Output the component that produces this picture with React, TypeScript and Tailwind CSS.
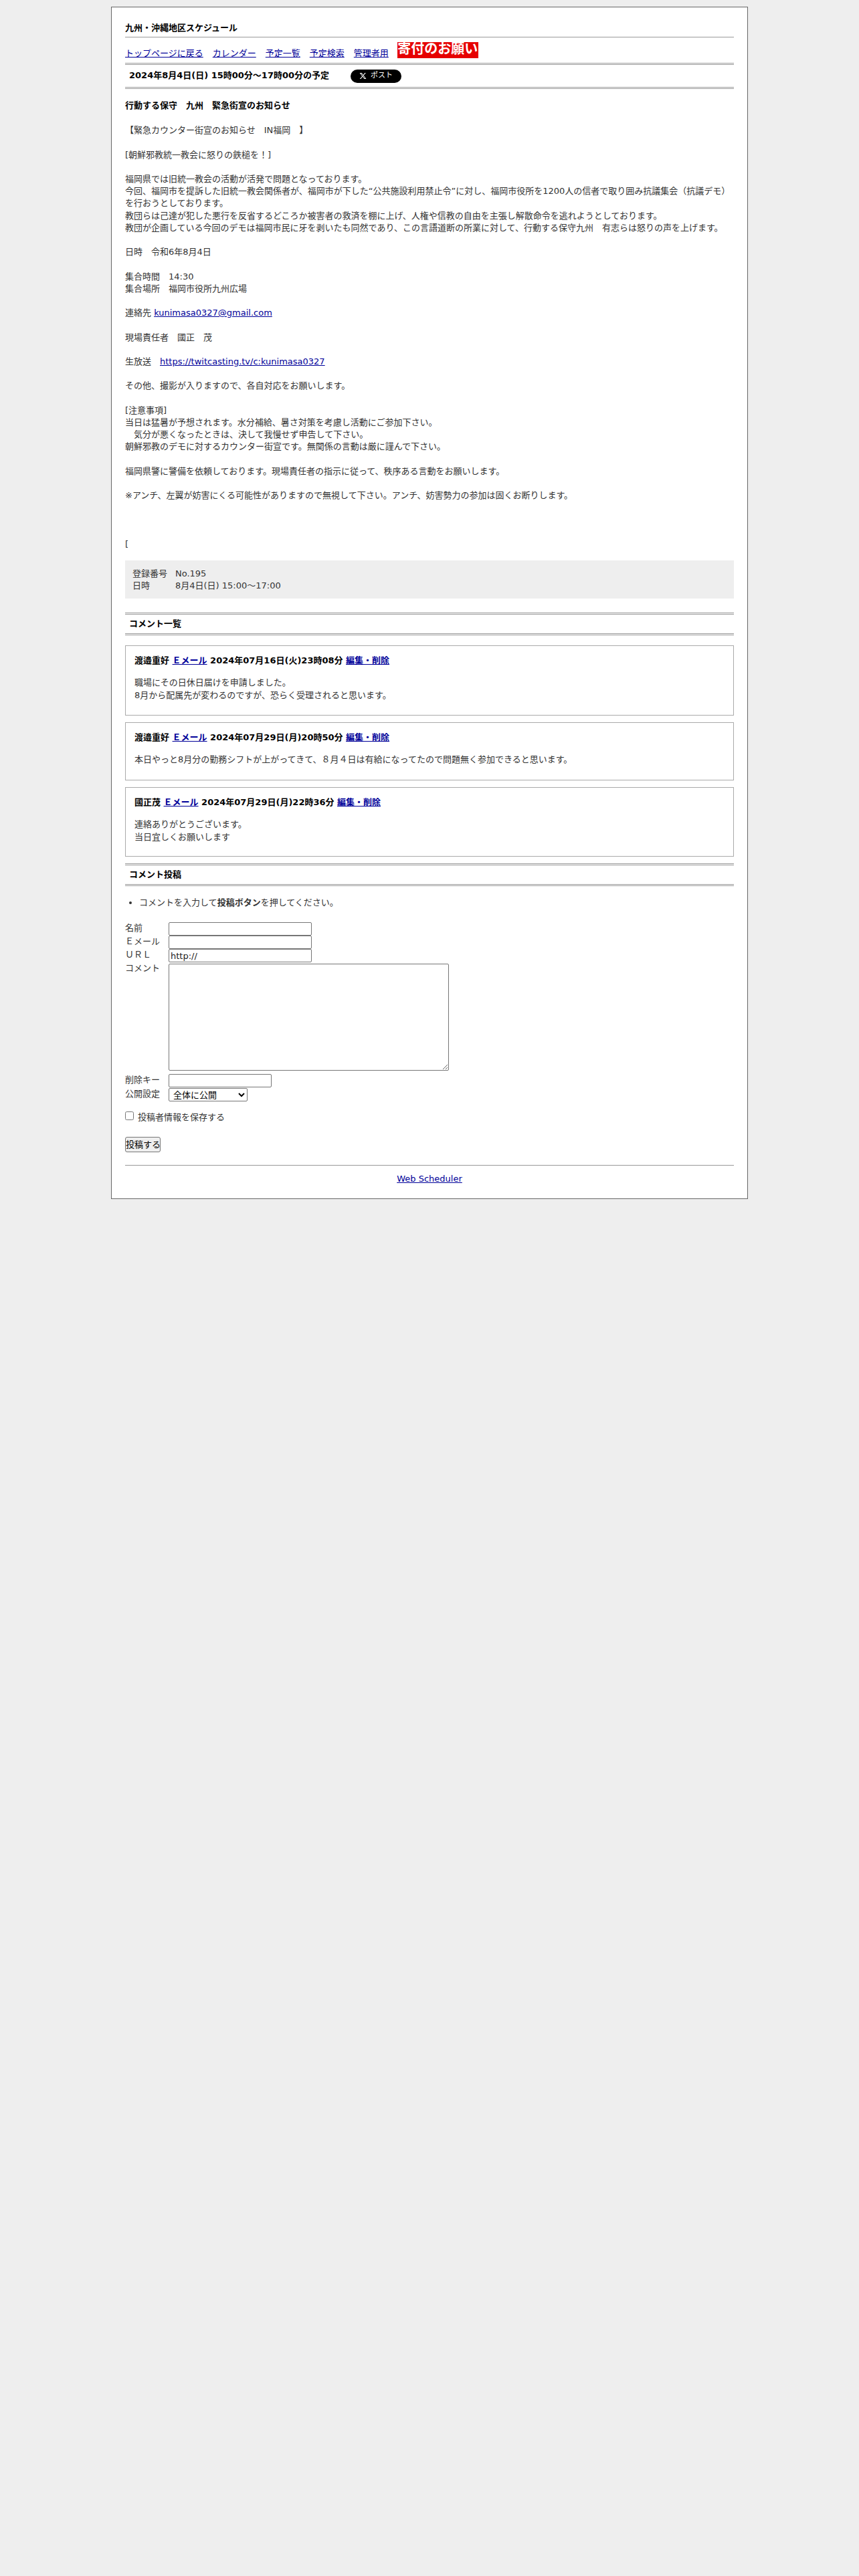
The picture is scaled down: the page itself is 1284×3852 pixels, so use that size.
const fontStack = 'font-["DejaVu_Sans","Noto_Sans_CJK_JP",sans-serif]'

const linkClass = 'text-[#000099] underline'

function DoubleRule() {
  return <div className="h-[3px] border-y border-[#999]" />
}

function Blank() {
  return <div className="h-[18.2px]" />
}

function SectionHeading({ children }: { children: React.ReactNode }) {
  return (
    <div>
      <DoubleRule />
      <div className="h-[28px] pl-[6px] flex items-center font-bold text-black">{children}</div>
      <DoubleRule />
    </div>
  )
}

function Comment({ name, date, lines, h }: { name: string; date: string; lines: string[]; h: string }) {
  return (
    <div className={`border border-[#aaa] pt-[13px] pl-[13px] ${h}`}>
      <div className="font-bold text-black">
        {name} <a className={linkClass}>Ｅメール</a> {date} <a className={linkClass}>編集・削除</a>
      </div>
      <div className="mt-[15px]">
        {lines.map(l => (
          <div key={l}>{l}</div>
        ))}
      </div>
    </div>
  )
}

const formLabels = 'w-[65px] shrink-0'
const inputClass = 'block h-[20px] border border-[#767676] rounded-[2px] bg-white px-[2px] text-[#222]'

export default function App() {
  return (
    <div className={`min-h-[3852px] bg-[#eee] pt-[10px] text-[13px] leading-[18.2px] text-[#333] ${fontStack}`}>
      <div className="mx-auto w-[952px] h-[1783px] border border-[#666] bg-white px-[20px] pt-[22px]">
        <h1 className="h-[22px] font-bold text-black">九州・沖縄地区スケジュール</h1>
        <div className="border-t border-[#999]" />

        <div className="h-[38px] flex items-end gap-[14px] pb-[5px]">
          <a className={linkClass}>トップページに戻る</a>
          <a className={linkClass}>カレンダー</a>
          <a className={linkClass}>予定一覧</a>
          <a className={linkClass}>予定検索</a>
          <a className={linkClass}>管理者用</a>
          <span className="-ml-[1px] mb-[2px] h-[24px] w-[121px] bg-[#e60000] text-center text-[20px] leading-[20px] font-bold text-white">
            寄付のお願い
          </span>
        </div>

        <DoubleRule />
        <div className="h-[33px] pl-[6px] flex items-center font-bold text-black">
          <span>2024年8月4日(日) 15時00分～17時00分の予定</span>
          <span className="ml-[32px] h-[20px] w-[76px] rounded-full bg-black text-white flex items-center justify-center gap-[6px] text-[11px] font-normal">
            <svg viewBox="0 0 24 24" className="w-[11px] h-[11px]" fill="currentColor">
              <path d="M18.244 2.25h3.308l-7.227 8.26 8.502 11.24H16.17l-5.214-6.817L4.99 21.75H1.68l7.73-8.835L1.254 2.25H8.08l4.713 6.231zm-1.161 17.52h1.833L7.084 4.126H5.117z" />
            </svg>
            ポスト
          </span>
        </div>
        <DoubleRule />

        <div className="mt-[16px] font-bold text-black">行動する保守　九州　緊急街宣のお知らせ</div>
        <div className="mt-[19px]">
          <div>【緊急カウンター街宣のお知らせ　IN福岡　】</div>
          <Blank />
          <div>[朝鮮邪教統一教会に怒りの鉄槌を！]</div>
          <Blank />
          <div>福岡県では旧統一教会の活動が活発で問題となっております。</div>
          <div>今回、福岡市を提訴した旧統一教会関係者が、福岡市が下した“公共施設利用禁止令”に対し、福岡市役所を1200人の信者で取り囲み抗議集会（抗議デモ）を行おうとしております。</div>
          <div>教団らは己達が犯した悪行を反省するどころか被害者の救済を棚に上げ、人権や信教の自由を主張し解散命令を逃れようとしております。</div>
          <div>教団が企画している今回のデモは福岡市民に牙を剥いたも同然であり、この言語道断の所業に対して、行動する保守九州　有志らは怒りの声を上げます。</div>
          <Blank />
          <div>日時　令和6年8月4日</div>
          <Blank />
          <div>集合時間　14:30</div>
          <div>集合場所　福岡市役所九州広場</div>
          <Blank />
          <div>連絡先 <a className={linkClass}>kunimasa0327@gmail.com</a></div>
          <Blank />
          <div>現場責任者　國正　茂</div>
          <Blank />
          <div>生放送　<a className={linkClass}>https://twitcasting.tv/c:kunimasa0327</a></div>
          <Blank />
          <div>その他、撮影が入りますので、各自対応をお願いします。</div>
          <Blank />
          <div>[注意事項]</div>
          <div>当日は猛暑が予想されます。水分補給、暑さ対策を考慮し活動にご参加下さい。</div>
          <div>　気分が悪くなったときは、決して我慢せず申告して下さい。</div>
          <div>朝鮮邪教のデモに対するカウンター街宣です。無関係の言動は厳に謹んで下さい。</div>
          <Blank />
          <div>福岡県警に警備を依頼しております。現場責任者の指示に従って、秩序ある言動をお願いします。</div>
          <Blank />
          <div>※アンチ、左翼が妨害にくる可能性がありますので無視して下さい。アンチ、妨害勢力の参加は固くお断りします。</div>
          <Blank />
          <Blank />
          <Blank />
          <div>[</div>
        </div>

        <div className="mt-[15px] h-[57px] bg-[#eee] pl-[11px] pt-[11px]">
          <div className="flex"><span className="w-[64px]">登録番号</span><span>No.195</span></div>
          <div className="flex"><span className="w-[64px]">日時</span><span>8月4日(日) 15:00～17:00</span></div>
        </div>

        <div className="mt-[21px]">
          <SectionHeading>コメント一覧</SectionHeading>
        </div>

        <div className="mt-[15px] flex flex-col gap-[10px]">
          <Comment
            h="h-[105px]"
            name="渡邉重好"
            date="2024年07月16日(火)23時08分"
            lines={['職場にその日休日届けを申請しました。', '8月から配属先が変わるのですが、恐らく受理されると思います。']}
          />
          <Comment
            h="h-[87px]"
            name="渡邉重好"
            date="2024年07月29日(月)20時50分"
            lines={['本日やっと8月分の勤務シフトが上がってきて、８月４日は有給になってたので問題無く参加できると思います。']}
          />
          <Comment
            h="h-[104px]"
            name="國正茂"
            date="2024年07月29日(月)22時36分"
            lines={['連絡ありがとうございます。', '当日宜しくお願いします']}
          />
        </div>

        <div className="mt-[10px]">
          <SectionHeading>コメント投稿</SectionHeading>
        </div>

        <ul className="mt-[16px] ml-[21px] list-disc">
          <li>コメントを入力して<b>投稿ボタン</b>を押してください。</li>
        </ul>

        <form className="mt-[20px]">
          <div className="flex h-[20px]"><span className={formLabels}>名前</span><input className={`${inputClass} w-[214px]`} /></div>
          <div className="flex h-[20px]"><span className={formLabels}>Ｅメール</span><input className={`${inputClass} w-[214px]`} /></div>
          <div className="flex h-[20px]"><span className={formLabels}>ＵＲＬ</span><input className={`${inputClass} w-[214px]`} defaultValue="http://" /></div>
          <div className="flex">
            <span className={formLabels}>コメント</span>
            <textarea className="block mt-[2px] h-[160px] w-[419px] border border-[#767676] rounded-[2px] bg-white" />
          </div>
          <div className="flex h-[20px] mt-[5px]"><span className={formLabels}>削除キー</span><input className={`${inputClass} w-[154px]`} /></div>
          <div className="flex h-[20px] mt-[1px]">
            <span className={formLabels}>公開設定</span>
            <select className="h-[20px] w-[118px] border border-[#767676] rounded-[2px] bg-white pl-[2px] text-black appearance-auto">
              <option>全体に公開</option>
            </select>
          </div>
          <label className="mt-[15px] flex items-start h-[13px]">
            <input type="checkbox" className="m-0 mr-[6px] w-[13px] h-[13px] appearance-auto" />
            <span>投稿者情報を保存する</span>
          </label>
          <button type="button" className="mt-[25px] block h-[23px] w-[53px] p-0 whitespace-nowrap border border-[#767676] rounded-[3px] bg-[#efefef] text-black text-center">投稿する</button>
        </form>

        <div className="mt-[19px] border-t border-[#999]" />
        <div className="mt-[11px] text-center"><a className={linkClass}>Web Scheduler</a></div>
      </div>
    </div>
  )
}
